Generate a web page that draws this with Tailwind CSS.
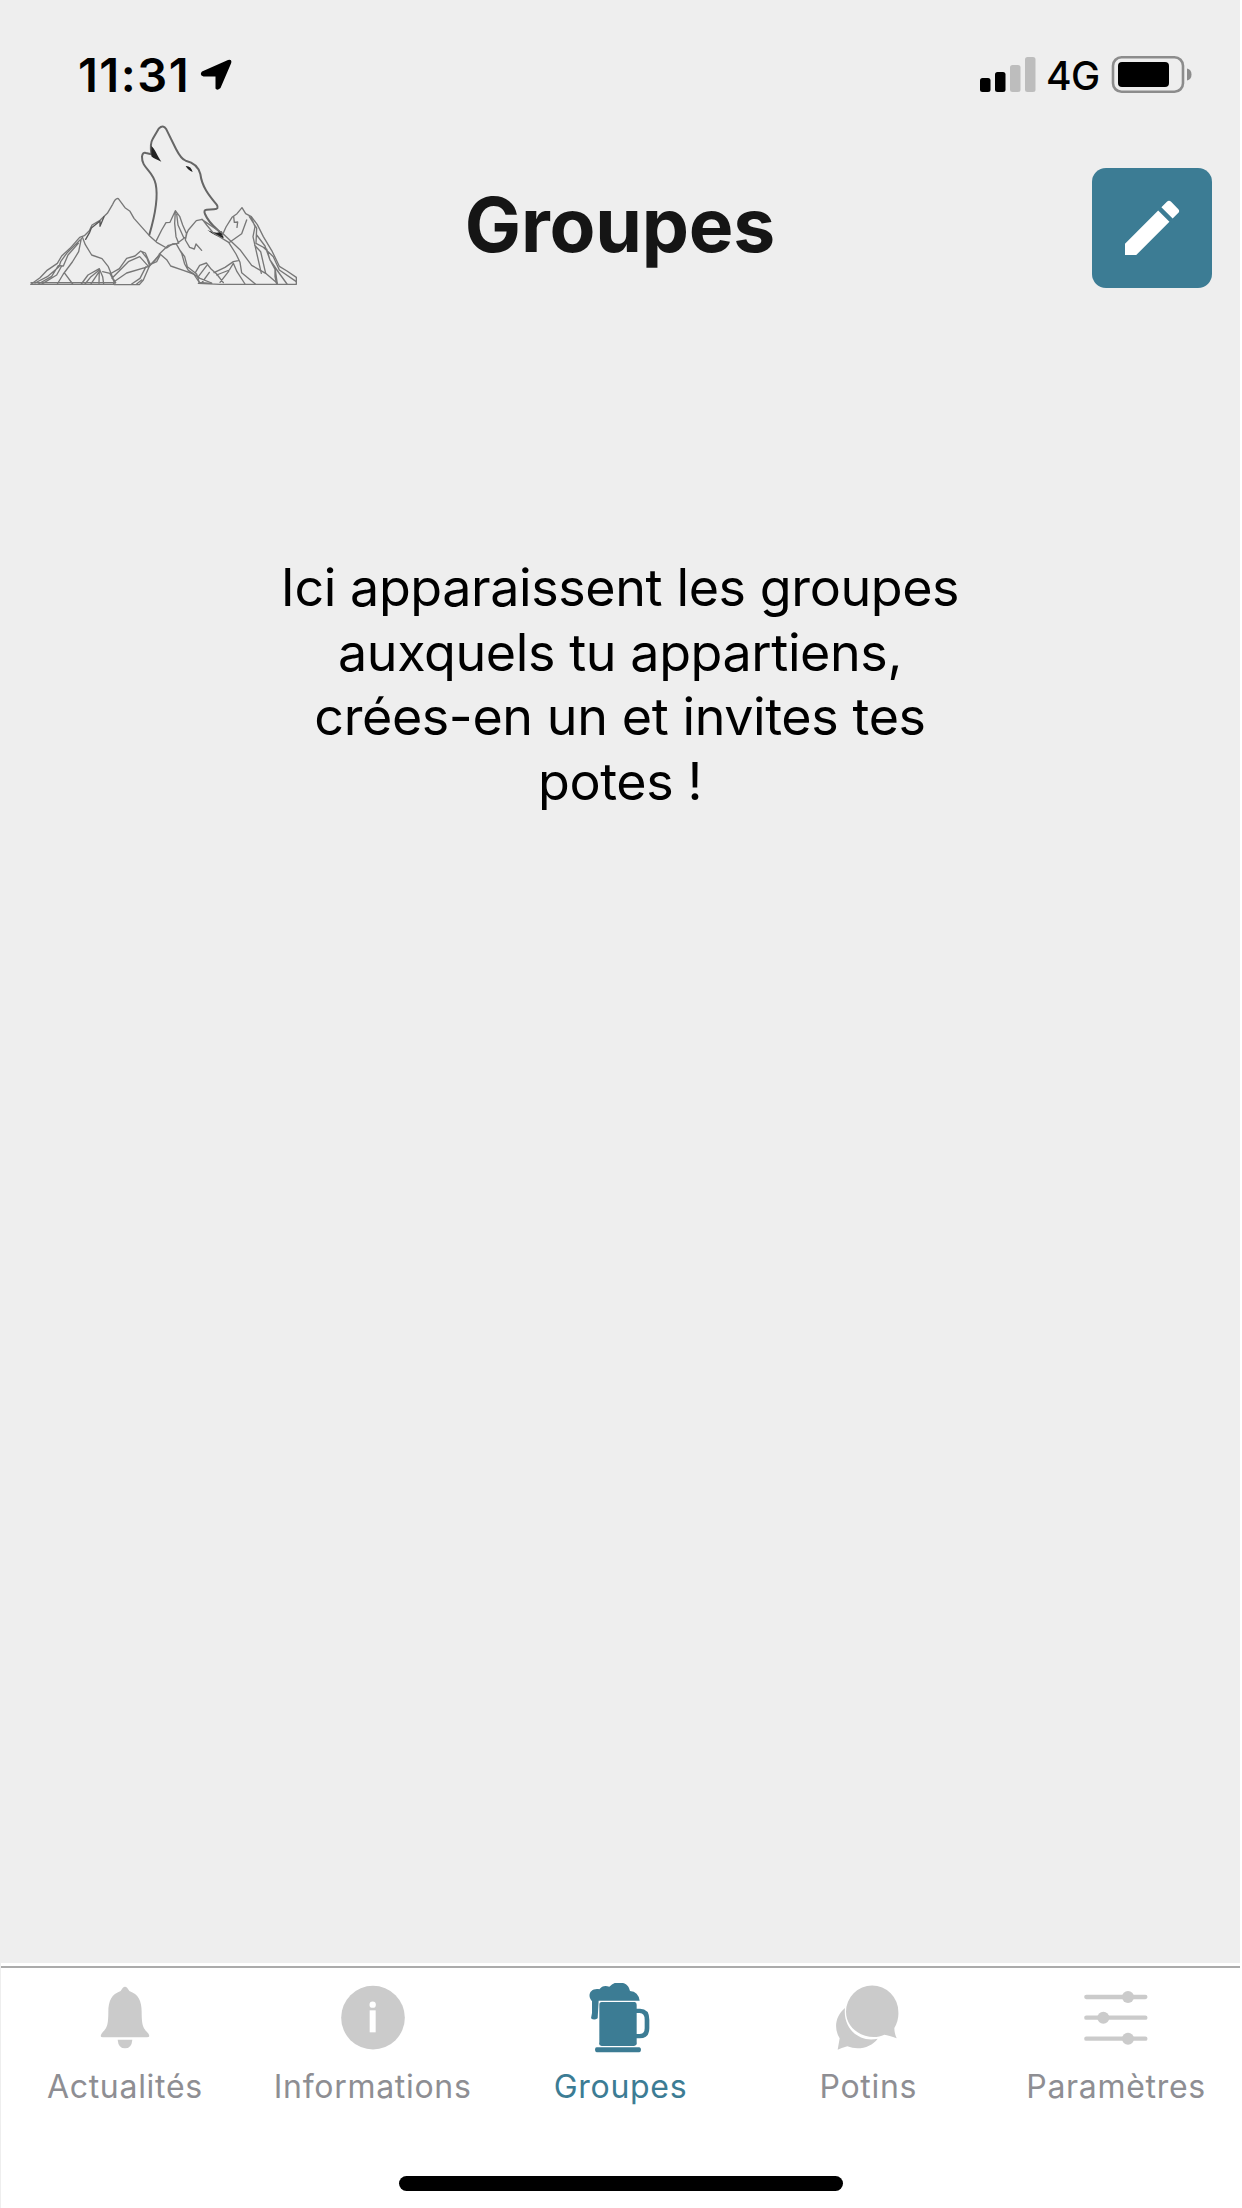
<!DOCTYPE html>
<html lang="fr">
<head>
<meta charset="utf-8">
<title>Groupes</title>
<script src="https://cdn.jsdelivr.net/npm/@tailwindcss/browser@4"></script>
</head>
<body class="bg-[#eeeeee] font-['Inter',sans-serif]">
<div class="flex h-[2208px] w-[1242px] flex-col overflow-hidden border-r-2 border-white">
  <!-- Status bar -->
  <div class="flex h-[110px] shrink-0 items-start justify-between pl-[78px] pr-[47px] pt-[44px] text-black">
    <div class="flex items-start">
      <span class="w-[122px] whitespace-nowrap text-[47px] font-semibold leading-[62px] tracking-[1.500px]">11:31</span>
      <svg class="mt-[15px] h-[32px] w-[32px]" viewBox="0 0 32 32"><path d="M2 12.500 28 1Q32.500-.5 31 4.500L20.500 29q-3.500 3-5 .5V17.500H3.500q-4.500-1.500-1.500-5Z"/></svg>
    </div>
    <div class="flex items-start">
      <svg class="mt-[13px] h-[35px] w-[56px]" viewBox="0 0 56 35"><rect y="21" width="10.500" height="14" rx="2.500"/><rect x="15" y="15" width="10.500" height="20" rx="2.500"/><g fill="#bdbdbd"><rect x="30" y="8" width="10.500" height="27" rx="2.500"/><rect x="45" width="10.500" height="35" rx="2.500"/></g></svg>
      <span class="ml-[10px] w-[65px] whitespace-nowrap text-[39px] font-medium leading-[63px] tracking-[-.5px]">4G</span>
      <svg class="mt-[12px] h-[37px] w-[82px]" viewBox="0 0 82 37"><rect x="2" y="1.300" width="70" height="34.400" rx="8.500" fill="none" stroke="#8c8c8c" stroke-width="2.600"/><rect x="7" y="6" width="51" height="25" rx="4"/><path d="M76 12.500q4.500 1 4.500 6t-4.500 6Z" fill="#8c8c8c"/></svg>
    </div>
  </div>

  <!-- Header -->
  <header class="grid h-[190px] shrink-0 grid-cols-3 items-start">
    <svg class="h-[190px] w-[290px] ml-5" viewBox="0 0 870 570" fill="none" stroke="#777" stroke-width="4" stroke-linejoin="round" stroke-linecap="round">
      <path stroke="#666" stroke-width="6" d="M388 374C404 320 415 260 407 222 398 180 365 175 366 140Q368 125 378 129L394 133C391 110 391 98 398 87L416 56Q430 42 439 58L468 117Q484 148 497 152C523 158 536 172 541 192 546 230 566 256 590 284Q599 297 582 298L560 299Q550 300 555 312C567 342 590 356 608 374"/>
      <path fill="#222" stroke="none" d="M394 108C405 116 411 136 424 155 412 150 400 145 394 139ZM497 168Q513 167 518 186 505 182 497 168ZM562 360Q590 374 606 364L611 385Q584 378 562 360Z"/>
      <path d="M33 523 60 503 80 482 112 460 125 438 150 415 179 382 193 377 208 362 216 345 240 331 262 310 278 283Q287 263 295 266L315 293 330 304 342 325 388 377 410 397 440 414 457 402 470 401"/>
      <path d="M33 518H280L283 524H358L370 510 388 469 420 432 440 449 452 468 490 481 521 492 538 517 575 520M33 523H280M535 520 600 523H829V502L801 483 778 469 757 425 730 380 712 344 694 320 677 311 666 293 651 311 636 322 618 351 607 376"/>
      <path d="M45 519 82 500 117 470 122 455 140 430 180 390M55 522 95 499 115 467 130 468 144 435 175 400M64 523 110 495 125 468M112 522 130 492 157 456 176 425 184 385M135 491 158 522"/>
      <path stroke="#555" d="M197 388 209 367 214 354 240 333 240 349 252 320"/>
      <path d="M187 381 196 404 215 435 246 446 265 470 279 505 287 518M270 492 298 476 320 445 345 438 362 423 376 429 390 461M276 505 325 455 359 440 386 470M281 516 320 489 385 470 405 451 420 432M184 522 204 495 238 476 248 500 251 522M195 522 213 500 238 480 237 520M248 485 270 490 285 520M212 523 236 487M335 522 360 505 378 470M350 522 365 510M365 425 381 445 388 465 410 455 420 436"/>
      <path d="M409 392 425 360 438 338 450 337 466 302 479 319 488 345 500 372 496 390 509 412 523 417 528 402 545 421M466 304 464 340 468 380 476 400M470 312 474 345 492 385M418 432 445 406 470 401 497 381M498 376 505 360 529 332 547 328 560 345 580 369 626 397 648 432 660 457 665 488 706 522M545 328 610 372 660 419 695 466 737 490 772 520M470 404 485 430 494 462 505 481 540 505 575 519M478 418 494 440 502 470 530 492 538 518M526 488 539 466 559 459 574 478 590 492 610 518M535 500 560 467M582 488 615 472 640 455 655 452M590 495 628 480 640 460 651 485 675 522M600 517 626 484M545 519 568 487"/>
      <path d="M629 397 665 371 680 330M641 320 643 337 653 336 651 352M694 322 705 350 699 380 705 407 724 490M688 320 710 354 708 400 740 417 750 450 766 480 772 522M704 406 722 425 737 490M710 375 735 408 750 450 775 486 801 522M765 478 765 500 770 522M730 412 760 440 778 480 829 515"/>
    </svg>
    <h1 class="pt-[70px] text-center text-[75px] font-bold leading-[90px] tracking-[-.2px] text-[#151515]">Groupes</h1>
    <button class="mr-[28px] mt-[58px] flex size-[120px] items-center justify-center justify-self-end rounded-[14px] bg-[#3c7c94]" aria-label="Modifier">
      <svg class="size-[72px]" viewBox="0 0 24 24" fill="#fff"><path d="M3 17.250V21h3.750L17.810 9.940l-3.750-3.750ZM20.710 7.040a1 1 0 0 0 0-1.410l-2.340-2.340a1 1 0 0 0-1.410 0L15.130 5.120l3.750 3.750Z"/></svg>
    </button>
  </header>

  <main class="flex grow justify-center pt-[256px]">
    <p class="whitespace-nowrap text-center text-[52px] leading-[64.700px] tracking-[-.4px] text-black">Ici apparaissent les groupes<br>auxquels tu appartiens,<br>crées-en un et invites tes<br>potes !</p>
  </main>

  <!-- Tab bar -->
  <nav class="flex h-[245px] shrink-0 flex-col border-l border-[#eeeeee] bg-white pt-[3px] text-[#8e8e93]">
    <div class="h-[2px] bg-[#ababab]"></div>
    <div class="grid h-[196px] grid-cols-5 pt-[15px] text-center text-[32px] leading-[40px] tracking-[.7px]">
      <a class="flex flex-col items-center gap-[14px]">
        <svg class="h-[70px] w-[70px]" viewBox="0 0 210 210" fill="#cbcbcb"><path d="M105 11Q111 11 118 24C145 34 155 52 155 88 155 131 161 137 174 150Q183 163 171 163H39Q27 163 36 150C49 137 55 131 55 88 55 52 65 34 92 24Q99 11 105 11ZM83 170H127Q125 196 105 196T83 170Z"/></svg>
        <span>Actualités</span>
      </a>
      <a class="flex flex-col items-center gap-[14px]">
        <svg class="h-[70px] w-[70px]" viewBox="0 0 210 210"><circle cx="105" cy="104" r="95.500" fill="#cbcbcb"/><circle cx="104" cy="65" r="9.500" fill="#fff"/><path d="M95 82H113V148H95Z" fill="#fff"/></svg>
        <span>Informations</span>
      </a>
      <a class="flex flex-col items-center gap-[14px] text-[#3c7c94]">
        <svg class="h-[70px] w-[70px]" viewBox="0 0 210 210" fill="#3c7c94"><path d="M18 106 21 90 21 55C4 36 18 14 43 19Q54 4 73 11 93-9 117 1 132 8 135 24 160 26 164 53H41L38 106Q27 113 18 106ZM50 57H149Q155 58 155 65V77H165Q193 77 193 110V136Q193 166 164 166H155V178Q157 188 147 189H50Q40 188 43 178V65Q43 57 50 57ZM155 90V153H164Q179 153 179 136V110Q179 90 164 90ZM35 193H163Q168 194 168 200T163 208H35Q30 207 30 200T35 193Z" fill-rule="evenodd"/></svg>
        <span>Groupes</span>
      </a>
      <a class="flex flex-col items-center gap-[14px]">
        <svg class="h-[70px] w-[70px]" viewBox="0 0 210 210" fill="#cbcbcb"><path d="M36 75C6 100 2 137 20 166L14 200Q24 195 43 190C77 203 115 193 134 167 76 180 29 134 36 75Z"/><path d="M184 135Q184 151 191 166 168 157 154 155C109 178 39 145 39 86A78.500 78.500 0 0 1 196 86Q198 112 184 135Z"/></svg>
        <span>Potins</span>
      </a>
      <a class="flex flex-col items-center gap-[14px]">
        <svg class="h-[70px] w-[70px]" viewBox="0 0 210 210" fill="#cbcbcb" stroke="#cbcbcb"><path d="M16 42H193M16 104H193M16 167H193" stroke-width="13" stroke-linecap="round"/><g stroke="none"><circle cx="141" cy="42" r="18"/><circle cx="67" cy="104" r="18"/><circle cx="141" cy="167" r="18"/></g></svg>
        <span>Paramètres</span>
      </a>
    </div>
    <div class="ml-[398px] mt-[12px] h-[15px] w-[444px] rounded-full bg-black"></div>
  </nav>
</div>
</body>
</html>
